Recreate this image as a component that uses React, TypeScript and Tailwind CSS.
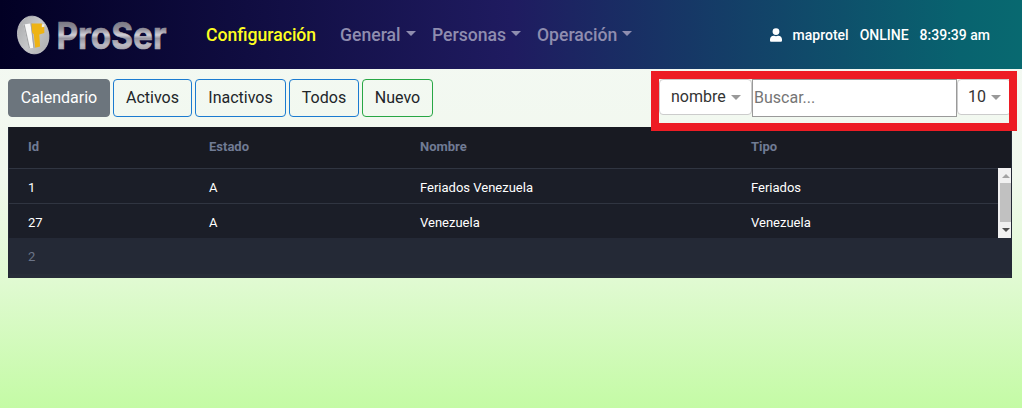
import React from "react";

function Logo() {
  return (
    <svg className="block h-[59px] w-[166px] shrink-0 overflow-visible" viewBox="0 0 166 59" role="img" aria-label="ProSer">
      <defs>
        <linearGradient id="metal" gradientUnits="userSpaceOnUse" x1="0" y1="11" x2="0" y2="39">
          <stop offset="0" stopColor="#777581" />
          <stop offset="0.3" stopColor="#92909b" />
          <stop offset="0.5" stopColor="#d2d1d8" />
          <stop offset="0.62" stopColor="#9694a0" />
          <stop offset="0.85" stopColor="#bbb9c2" />
          <stop offset="1" stopColor="#aaa8b2" />
        </linearGradient>
        <linearGradient id="disc" x1="0" y1="0" x2="1" y2="1">
          <stop offset="0" stopColor="#a5a6a8" />
          <stop offset="0.5" stopColor="#c6c7c9" />
          <stop offset="1" stopColor="#aaabad" />
        </linearGradient>
      </defs>
      <ellipse cx="21.2" cy="25" rx="15.6" ry="19" fill="url(#disc)" stroke="#d0d1d3" strokeWidth="0.7" transform="rotate(-12 21.2 25)" />
      <path d="M11.5 14.5 18.5 13.5 21.5 38l-4.5.3z" fill="#f7f7f7" />
      <path d="m11.5 14.5 1.2-.2L18 38.2h-1.2z" fill="#a5a6a8" />
      <path d="m18.5 13.5 1.2-.2 2.8 24.5-1 .2z" fill="#a5a2a3" />
      <path d="M19.5 13.5h10.3l.7 1.8 1.8.4v7.2l-5 1.5.8 12-4.9 1.4-1.5-13.6-1.6-1.8z" fill="#eeb315" />
      <path d="m29.8 14.5 2.6-.6v2.8l-2.6.5z" fill="#f1eee2" />
      <text x="44.5" y="38.5" textLength="110" lengthAdjust="spacingAndGlyphs" fontFamily="Inter, sans-serif" fontSize="37.5" fontWeight="700" fill="url(#metal)" stroke="url(#metal)" strokeWidth="0.7">ProSer</text>
    </svg>
  );
}

function Caret({ className = "" }: { className?: string }) {
  return <span className={`inline-block border-x-[5px] border-t-[5px] border-x-transparent ${className}`} />;
}

function Nav() {
  return (
    <header className="flex h-[69px] bg-[linear-gradient(90deg,#020024_0%,#1f1b60_50%,#08636f_94%,#086970_100%)] pl-3 pr-8 text-[17.6px] font-medium text-[#8f8daf]">
      <div className="pt-[10px]"><Logo /></div>
      <nav className="flex h-[69px] items-center pl-7 pt-[2px]">
        <a className="w-[134px] text-[#ffff20]">Configuración</a>
        {[
          { label: "General", width: "w-[92px]" },
          { label: "Personas", width: "w-[105px]" },
          { label: "Operación", width: "w-[97px]" },
        ].map((item) => (
          <a key={item.label} className={`${item.width} flex items-center gap-[5px]`}>
            {item.label}
            <Caret className="-mt-[3px] border-t-[#8f8daf]" />
          </a>
        ))}
      </nav>
      <div className="ml-auto flex h-[69px] items-center text-sm text-white">
        <svg className="mr-[11px] h-[14px] w-3" viewBox="0 0 448 512" fill="currentColor">
          <path d="M224 256A128 128 0 1 0 224 0a128 128 0 0 0 0 256zm90 32h-17a174 174 0 0 1-146 0h-17C60 288 0 348 0 422v42c0 27 21 48 48 48h352c27 0 48-21 48-48v-42c0-74-60-134-134-134z" />
        </svg>
        <span>maprotel</span>
        <span className="ml-[11px]">ONLINE</span>
        <span className="ml-[11px]">8:39:39 am</span>
      </div>
    </header>
  );
}

const filters = [
  { label: "Calendario", style: "w-[102px] border-[#6c757d] bg-[#6c757d] text-white" },
  { label: "Activos", style: "w-[79px] border-[#1b7bd0]" },
  { label: "Inactivos", style: "w-[91px] border-[#1b7bd0]" },
  { label: "Todos", style: "w-[70px] border-[#1b7bd0]" },
  { label: "Nuevo", style: "w-[71px] border-[#28a745]" },
];

function Toolbar() {
  return (
    <div className="flex h-[58px] items-start px-2 pt-[10px]">
      <div className="flex gap-[3px]">
        {filters.map((f) => (
          <button key={f.label} className={`h-[38px] rounded-[4px] border text-base ${f.style}`}>{f.label}</button>
        ))}
      </div>
      <div className="relative ml-auto mr-[3px] flex h-[38px]">
        <button className="flex h-9 w-[93px] items-center gap-[5px] rounded-[4px] border border-[#ccc] bg-white pl-[11px] text-base text-[#333]">
          nombre<Caret className="mt-px border-t-[#999]" />
        </button>
        <input className="h-[38px] w-[205px] border border-[#9a9a9a] bg-white px-px pb-[2px] text-base placeholder:text-[#757575]" placeholder="Buscar..." />
        <button className="flex h-9 w-[54px] items-center gap-[5px] rounded-[4px] border border-[#ccc] bg-white pl-[10px] text-base text-[#333]">
          10<Caret className="mt-px border-t-[#999]" />
        </button>
        <div className="pointer-events-none absolute left-[-8px] top-[-8px] h-[60px] w-[366px] border-8 border-[#ed1c24]" />
      </div>
    </div>
  );
}

const columns = "grid grid-cols-[181px_211px_331px_1fr] items-center";
const rows = [
  ["1", "A", "Feriados Venezuela", "Feriados"],
  ["27", "A", "Venezuela", "Venezuela"],
];

function Table() {
  return (
    <section className="mx-2 mr-[10px] h-[151px] border-x border-[#242936] bg-[#1b1e28] text-[13px] text-white">
      <div className={`${columns} h-[41px] bg-[#181a22] pl-[19px] pb-px font-bold text-[#707b94]`}>
        {["Id", "Estado", "Nombre", "Tipo"].map((c) => <span key={c}>{c}</span>)}
      </div>
      <div className="flex h-[70px]">
        <div className="flex-1">
          {rows.map((row) => (
            <div key={row[0]} className={`${columns} h-[35px] border-t border-[#303541] pl-[19px] pt-[3px]`}>
              {row.map((cell, i) => <span key={i}>{cell}</span>)}
            </div>
          ))}
        </div>
        <div className="flex h-[70px] w-[13px] flex-col items-center bg-[#f1f1f1]">
          <span className="mb-[5px] ml-[2px] mt-[6px] border-x-[4px] border-b-[4px] border-x-transparent border-b-[#a3a3a3]" />
          <span className="ml-[2px] h-[39px] w-[11px] bg-[#c1c1c1]" />
          <span className="ml-[2px] mt-[6px] border-x-[4px] border-t-[4px] border-x-transparent border-t-[#505050]" />
        </div>
      </div>
      <div className="h-10 border-b-4 border-[#272c38] bg-[#242936] pl-[19px] pt-[9px] text-[#6b7488]">2</div>
    </section>
  );
}

export default function App() {
  return (
    <div className="h-[408px] overflow-hidden bg-[linear-gradient(180deg,#f4f9f4_0%,#f1f8ee_43%,#e1fad3_68%,#c4fba5_100%)] font-[Roboto,sans-serif] text-[#212529]">
      <Nav />
      <Toolbar />
      <Table />
    </div>
  );
}
